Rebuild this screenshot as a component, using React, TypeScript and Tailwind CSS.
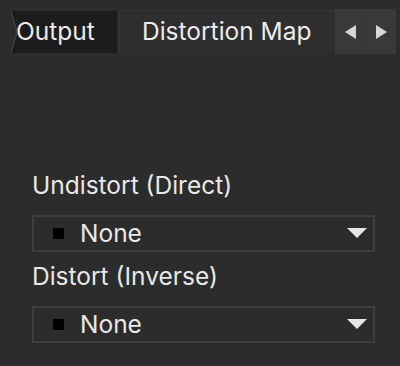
const FONT = { fontFamily: 'Inter, "Liberation Sans", sans-serif' };

function Dropdown({ value }: { value: string }) {
  return (
    <div className="h-[37px] w-[343px] border-2 border-[#3e3e3e] flex items-center pl-[19px] pr-[6px]">
      <span className="w-[11px] h-[11px] bg-black" />
      <span className="ml-[16px] text-[24.5px] text-[#e8e8e8] leading-none flex-1">{value}</span>
      <svg width="20" height="11" viewBox="0 0 20 11">
        <polygon points="0,0 20,0 10,10" fill="#e6e6e6" />
      </svg>
    </div>
  );
}

export default function App() {
  return (
    <div className="w-[400px] h-[366px] bg-[#2c2c2c] overflow-hidden" style={FONT}>
      {/* Tab strip */}
      <div className="flex items-start pt-[9px] h-[56px]">
        <div className="relative mt-[2px] ml-[11px] w-[106px] h-[42px] bg-[#1c1c1c] flex items-center pb-[2px] pl-[5px] text-[24.5px] text-[#ebebeb]">
          <svg width="8" height="42" viewBox="0 0 8 42" className="absolute left-0 top-0">
            <polygon points="0,0 6,21 0,42" fill="#2c2c2c" />
            <polyline points="0,0 6,21 0,42" fill="none" stroke="#4a4a4a" strokeWidth="1" />
          </svg>
          Output
        </div>
        <div className="mt-[1px] ml-[2px] w-[216px] h-[44px] bg-[#2e2e2e] border-t border-l border-[#363636] flex items-center pb-[2px] pl-[22px] text-[24.5px] text-[#ebebeb]">
          Distortion Map
        </div>
        <div className="w-[61px] h-[45px] bg-[#393939] flex">
          <button className="flex-1 flex items-center justify-center border-r border-[#333333]">
            <svg width="11" height="14" viewBox="0 0 11 14">
              <polygon points="11,0 11,14 0,7" fill="#d6d6d6" />
            </svg>
          </button>
          <button className="flex-1 flex items-center justify-center">
            <svg width="11" height="14" viewBox="0 0 11 14">
              <polygon points="0,0 0,14 11,7" fill="#d6d6d6" />
            </svg>
          </button>
        </div>
      </div>

      {/* Fields */}
      <div className="pl-[32px] pt-[117px]">
        <div className="text-[24.5px] text-[#e8e8e8] leading-[25px]">Undistort (Direct)</div>
        <div className="mt-[17px]">
          <Dropdown value="None" />
        </div>
        <div className="mt-[12px] text-[24.5px] text-[#e8e8e8] leading-[25px]">Distort (Inverse)</div>
        <div className="mt-[17px]">
          <Dropdown value="None" />
        </div>
      </div>
    </div>
  );
}
